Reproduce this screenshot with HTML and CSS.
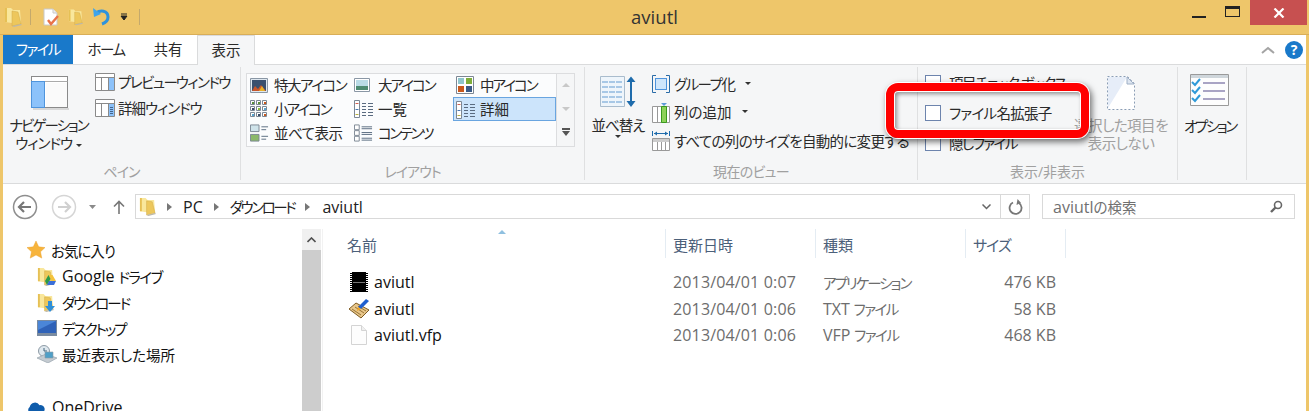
FILE: index.html
```html
<!DOCTYPE html>
<html lang="ja">
<head>
<meta charset="utf-8">
<title>aviutl</title>
<link rel="stylesheet" href="styles.css">
</head>
<body>
<svg class="defs" width="0" height="0">
	<symbol id="folder" viewBox="0 0 18 20">
		<path d="M1 1h6l2 2 7 0 1 13H8l-7-1z" fill="#f9e79c"/>
		<path d="M1 1h2v14H1z" fill="#e6c055"/>
		<path d="M8 4l6 1 3 12-9 2z" fill="#edc75c" stroke="#d0aa48" stroke-width=".5"/>
		<path d="M8 19l9-2 1 1-8 2z" fill="#bdb8a8"/>
	</symbol>
	<symbol id="grid" viewBox="0 0 18 18">
		<g fill="#fff" stroke="#7c8794">
			<path d="M.5.5h4v4h-4zM6.5.5h4v4h-4zM12.5.5h4v4h-4zM.5 6.5h4v4h-4zM6.5 6.5h4v4h-4zM12.5 6.5h4v4h-4zM.5 12.5h4v4h-4zM6.5 12.5h4v4h-4zM12.5 12.5h4v4h-4z"/>
		</g>
		<path fill="#5c8f3c" d="M2 2h2v2H2zM8 2h2v2H8z"/><path fill="#c9581c" d="M14 2h2v2h-2zM14 14h2v2h-2z"/>
		<path fill="#3a4a66" d="M2 8h2v2H2zM8 14h2v2H8z"/><path fill="#8dbb3b" d="M8 8h2v2H8z"/><path fill="#58a4d0" d="M14 8h2v2h-2zM2 14h2v2H2z"/>
	</symbol>
	<symbol id="lines" viewBox="0 0 20 18">
		<path d="M.5.5h5v17h-5z" fill="#fff" stroke="#7c8794"/>
		<path d="M1.5 3.5h3" stroke="#d06050"/><path d="M1.5 9.5h3" stroke="#4a78b0"/><path d="M1.5 14.5h3" stroke="#b8b040"/>
		<path d="M8 3.5h4M14 3.5h5M8 6.5h4M14 6.5h5M8 9.5h4M14 9.5h5M8 12.5h4M14 12.5h5M8 15.5h4M14 15.5h5" stroke="#5a6b80"/>
	</symbol>
	<symbol id="check" viewBox="0 0 16 16">
		<rect x=".5" y=".5" width="15" height="15" fill="#fff" stroke="#6d84ad"/>
	</symbol>
</svg>

<div class="window">
	<header class="titlebar">
		<div class="qat">
			<svg width="18" height="20"><use href="#folder"/></svg>
			<span class="qat-sep sep-a"></span>
			<svg width="20" height="20" viewBox="0 0 20 20"><path d="M2 2h9l4 4v12H2z" fill="#fff" stroke="#c8c8c8"/><path d="M11 2v4h4" fill="#eee" stroke="#c8c8c8"/><path d="M6 13l3 4 7-8" fill="none" stroke="#e8734a" stroke-width="2.4"/></svg>
			<svg class="qat-folder" width="15" height="20"><use href="#folder"/></svg>
			<svg class="qat-undo" width="18" height="20" viewBox="0 0 18 20"><path d="M3 6c4-3 12-3 12 4 0 4-3 6-6 7" fill="none" stroke="#2f93dc" stroke-width="3"/><path d="M0 1l1 9 7-3z" fill="#3fa4ea"/></svg>
			<svg class="qat-more" width="8" height="8" viewBox="0 0 8 8"><path d="M1 1h6M1 3h6L4 7z" stroke="#222" fill="#222"/></svg>
			<span class="qat-sep sep-b"></span>
		</div>
		<div class="title">aviutl</div>
		<div class="caption">
			<span class="cap-min"></span>
			<span class="cap-max"></span>
			<span class="cap-close">
				<svg width="12" height="10" viewBox="0 0 12 10"><path d="M1.5 .5l9 9M10.5 .5l-9 9" stroke="#fff" stroke-width="2.2"/></svg>
			</span>
		</div>
	</header>

	<div class="inner">
		<nav class="tabs">
			<a class="tab tab-file t3">ファイル</a>
			<a class="tab tab-home t3">ホーム</a>
			<a class="tab tab-share">共有</a>
			<a class="tab tab-view">表示</a>
			<div class="tabs-right">
				<svg width="14" height="8" viewBox="0 0 14 8"><path d="M1 7l6-5 6 5" fill="none" stroke="#a4a4a4" stroke-width="2"/></svg>
				<span class="help">?</span>
			</div>
		</nav>

		<section class="ribbon">
			<div class="group g-pane">
				<div class="body pane-body">
					<div class="big-btn nav-btn">
						<svg width="38" height="34" viewBox="0 0 38 34">
							<path d="M2 32h36v2H2z" fill="#d8d8d8"/>
							<rect x=".5" y=".5" width="36" height="31" fill="#fff" stroke="#8a8a8a"/>
							<path d="M.5 5.5h36" stroke="#aaa"/>
							<rect x=".5" y="5.5" width="13" height="26" fill="#8cc2fa" stroke="#4f94dc"/>
							<path d="M15 7h21v24H15z" fill="#fafafa"/>
						</svg>
						<span class="big-label"><span class="t4">ナビゲーション</span><br><span class="t2">ウィンドウ</span> <i class="caret"></i></span>
					</div>
					<div class="pane-list">
						<div class="small-btn t3 word-tight"><svg width="20" height="18" viewBox="0 0 20 18"><path d="M.5.5h19v17H.5z" fill="#fff" stroke="#8a8a8a"/><path d="M.5 4.5h19M6.5 4.5v13M13.5 4.5v13" stroke="#8a8a8a"/><path d="M14 5h5v12h-5z" fill="#8cc2fa"/></svg>プレビュー ウィンドウ</div>
						<div class="small-btn t2"><svg width="20" height="18" viewBox="0 0 20 18"><path d="M.5.5h19v17H.5z" fill="#fff" stroke="#8a8a8a"/><path d="M.5 4.5h19M6.5 4.5v13M13.5 4.5v13" stroke="#8a8a8a"/><path d="M14 5h5v12h-5z" fill="#8cc2fa"/><path d="M15 8.5h3M15 10.5h3M15 12.5h3M15 14.5h3" stroke="#44658c"/></svg>詳細ウィンドウ</div>
					</div>
				</div>
				<div class="group-label t2">ペイン</div>
			</div>

			<div class="group g-layout">
				<div class="body layout-body">
					<div class="gallery">
						<div class="g-item t3"><svg width="18" height="15" viewBox="0 0 18 15"><path d="M.5.5h17v14H.5z" fill="#dfe8f0" stroke="#8a97a5"/><path d="M2 2h14v11H2z" fill="#39506f"/><path d="M2 13l3-5 3 3 3-4 5 6z" fill="#c8562c"/><path d="M9 13l3-5 3 5z" fill="#e8b32a"/></svg>特大アイコン</div>
						<div class="g-item t4"><svg width="16" height="14" viewBox="0 0 16 14"><path d="M.5.5h15v13H.5z" fill="#fff" stroke="#8a97a5"/><path d="M2 2h12v6H2z" fill="#b9dbe6"/><path d="M2 8h12v4H2z" fill="#4d8b72"/></svg>大アイコン</div>
						<div class="g-item t4"><svg width="18" height="18" viewBox="0 0 18 18"><path d="M.5.5h17v17H.5z" fill="#fff" stroke="#7c8794"/><path d="M2 2h6v6H2z" fill="#8fc6cd"/><path d="M10 2h6v6h-6z" fill="#7fae3b"/><path d="M2 10h6v6H2z" fill="#c9581c"/><path d="M10 10h6v6h-6z" fill="#3a5a86"/></svg>中アイコン</div>
						<div class="g-item t4"><svg width="18" height="18"><use href="#grid"/></svg>小アイコン</div>
						<div class="g-item"><svg width="20" height="18"><use href="#lines"/></svg>一覧</div>
						<div class="g-item selected"><svg width="20" height="18"><use href="#lines"/></svg>詳細</div>
						<div class="g-item t1"><svg width="19" height="18" viewBox="0 0 20 18"><path d="M.5.5h9v7h-9z" fill="#cfe3ea" stroke="#7c8794"/><path d="M.5 10.5h9v7h-9z" fill="#8bb86a" stroke="#7c8794"/><path d="M12 2.5h7M12 5.5h5M12 12.5h7M12 15.5h5" stroke="#5a6b80"/></svg>並べて表示</div>
						<div class="g-item t5"><svg width="19" height="18" viewBox="0 0 20 18"><path d="M.5.5h5v5h-5zM.5 6.5h5v5h-5zM.5 12.5h5v5h-5z" fill="#fff" stroke="#7c8794"/><path d="M8 2.5h11M8 4.5h11M8 8.5h11M8 10.5h11M8 14.5h11M8 16.5h11" stroke="#5a6b80"/></svg>コンテンツ</div>
					</div>
					<div class="gallery-scroll">
						<span class="arrow-up"></span>
						<span class="arrow-down"></span>
						<svg width="10" height="8" viewBox="0 0 10 8"><path d="M1 0h8v2H1zM1 3h8L5 8z" fill="#555"/></svg>
					</div>
				</div>
				<div class="group-label t2">レイアウト</div>
			</div>

			<div class="group g-current">
				<div class="body current-body">
					<div class="big-btn sort-btn">
						<svg width="36" height="32" viewBox="0 0 36 32">
							<path d="M.5.5h24v30H.5z" fill="#eef5fb" stroke="#a9bccd"/>
							<path d="M2 6h21M2 11h21M2 16h21M2 21h21M2 26h21" stroke="#a8c8e6" stroke-width="2" stroke-dasharray="6 1"/>
							<path d="M31 3v25" stroke="#1f6cac" stroke-width="2"/>
							<path d="M26.5 6L31 .5 35.5 6zM26.5 25L31 31l4.5-6z" fill="#1f6cac"/>
						</svg>
						<span class="big-label t2">並べ替え</span>
						<i class="caret caret-below"></i>
					</div>
					<div class="current-list">
						<div class="small-btn t3"><svg width="18" height="18" viewBox="0 0 18 18"><path d="M4 .5H.5v17H4M14 .5h3.5v17H14" fill="none" stroke="#2a6ca8"/><rect x="3.5" y="3.5" width="11" height="11" fill="#cfe6fb" stroke="#4f94dc"/></svg>グループ化 <i class="caret c-after"></i></div>
						<div class="small-btn"><svg width="18" height="20" viewBox="0 0 18 20"><path d="M.5 3.5h17v16H.5z" fill="#fff" stroke="#999"/><path d="M5.5 3.5v16" stroke="#999"/><path d="M9.5 3.5h5v16h-5z" fill="#8ed25a" stroke="#3a9a1e"/><path d="M9 0h6l-3 3z" fill="#5f9bd8"/></svg>列の追加 <i class="caret c-after"></i></div>
						<div class="small-btn t07"><svg width="18" height="20" viewBox="0 0 18 20"><path d="M.5 0v5M17.5 0v5" stroke="#1f6cac"/><path d="M2 2.5h14" stroke="#1f6cac"/><path d="M2 2.5L5 .5v4zM16 2.5L13 .5v4z" fill="#1f6cac"/><path d="M.5 7.5h17v12H.5z" fill="#fff" stroke="#999"/><path d="M1 8h16v3H1z" fill="#ccc"/><path d="M5.5 11v8M9.5 11v8M13.5 11v8" stroke="#999"/></svg>すべての列のサイズを自動的に変更する</div>
					</div>
				</div>
				<div class="group-label t07">現在のビュー</div>
			</div>

			<div class="group g-show">
				<div class="body show-body">
					<div class="check-list">
						<div class="check-row t3"><svg width="16" height="16"><use href="#check"/></svg>項目チェック ボックス</div>
						<div class="check-row t07"><svg width="16" height="16"><use href="#check"/></svg>ファイル名拡張子</div>
						<div class="check-row t3"><svg width="16" height="16"><use href="#check"/></svg>隠しファイル</div>
					</div>
					<div class="big-btn hide-btn">
						<svg width="28" height="34" viewBox="0 0 28 34"><path d="M.5.5h20l7 7v26H.5z" fill="#fff" stroke="#8b9db5" stroke-dasharray="2 2"/><path d="M1 1h19L1 32z" fill="#e6edf8"/><path d="M20 1v7h7z" fill="#dde5f0" stroke="#9fb0c6"/></svg>
						<span class="big-label disabled t1">選択した項目を<br>表示しない</span>
					</div>
				</div>
				<div class="group-label">表示/非表示</div>
			</div>

			<div class="group g-option">
				<div class="body option-body">
					<div class="big-btn option-btn">
						<svg width="40" height="33" viewBox="0 0 40 33">
							<path d="M.5.5h38v31H.5z" fill="#fdfdfd" stroke="#9a9a9a"/>
							<path d="M1 1h37v3H1z" fill="#cfd6db"/>
							<path d="M2 8l3 3 5-6M2 16l3 3 5-6M2 24l3 3 5-6" fill="none" stroke="#2f9ad8" stroke-width="2"/>
							<path d="M13 9h22M13 17h22M13 25h22" stroke="#a9a4c4" stroke-width="2"/>
						</svg>
						<span class="big-label t5">オプション</span>
					</div>
				</div>
				<div class="group-label"></div>
			</div>
		</section>

		<div class="addressbar">
			<div class="nav-buttons">
				<svg width="26" height="26" viewBox="0 0 26 26"><circle cx="13" cy="13" r="11.5" fill="#fff" stroke="#8e8e8e" stroke-width="1.5"/><path d="M19 13H8M12 8l-5 5 5 5" fill="none" stroke="#777" stroke-width="2.2"/></svg>
				<svg width="26" height="26" viewBox="0 0 26 26"><circle cx="13" cy="13" r="11.5" fill="#fff" stroke="#d5d5d5" stroke-width="1.5"/><path d="M7 13h11M14 8l5 5-5 5" fill="none" stroke="#d0d0d0" stroke-width="2.2"/></svg>
				<svg class="nav-down" width="8" height="4" viewBox="0 0 8 4"><path d="M0 0h7L3.5 4z" fill="#8a8a8a"/></svg>
				<svg class="nav-up" width="12" height="14" viewBox="0 0 12 14"><path d="M6 14V2M1 6.5l5-5 5 5" fill="none" stroke="#777" stroke-width="1.6"/></svg>
			</div>
			<div class="address">
				<svg width="17" height="19"><use href="#folder"/></svg>
				<i class="crumb-arrow"></i>
				<span class="lat">PC</span>
				<i class="crumb-arrow"></i>
				<span class="t5">ダウンロード</span>
				<i class="crumb-arrow"></i>
				<span class="lat crumb-last">aviutl</span>
				<span class="address-drop"><svg width="9" height="6" viewBox="0 0 9 6"><path d="M.5.5l4 4 4-4" fill="none" stroke="#666" stroke-width="1.5"/></svg></span>
				<span class="address-refresh"><svg width="15" height="16" viewBox="0 0 15 16"><path d="M5 3.5a6 6 0 1 0 6 .5" fill="none" stroke="#777" stroke-width="1.8"/><path d="M9 0v6l4-3z" fill="#777" transform="rotate(10 9 3)"/></svg></span>
			</div>
			<div class="search">
				<span><span class="lat">aviutl</span>の検索</span>
				<svg width="13" height="13" viewBox="0 0 13 13"><circle cx="8" cy="5" r="3.5" fill="none" stroke="#666" stroke-width="1.6"/><path d="M5.5 7.5L1 12" stroke="#666" stroke-width="2.4"/></svg>
			</div>
		</div>

		<div class="main">
			<aside class="tree">
				<div class="tree-list">
					<div class="tree-row top t2"><svg width="18" height="20" viewBox="0 0 20 20"><path d="M10 0l3 6.5 7 .8-5 4.7 1.4 7L10 15.5 3.6 19 5 12 0 7.3l7-.8z" fill="#f7b43c" stroke="#eaa12c" stroke-width=".5"/></svg>お気に入り</div>
					<div class="tree-row child"><span class="icon-wrap"><svg width="17" height="19"><use href="#folder"/></svg><svg class="badge" width="11" height="10" viewBox="0 0 11 10"><path d="M3.5 0h4L11 6H7z" fill="#f5c33b"/><path d="M3.5 0L0 6l2 4 3.5-6z" fill="#2b9a4a"/><path d="M2 10l2-4h7l-2 4z" fill="#3a6fd8"/></svg></span><span class="lat">Google</span>&nbsp;<span class="t3">ドライブ</span></div>
					<div class="tree-row child t4"><span class="icon-wrap"><svg width="17" height="19"><use href="#folder"/></svg><svg class="badge" width="10" height="11" viewBox="0 0 10 11"><path d="M3 0h4v5h3l-5 6-5-6h3z" fill="#2f8fd8"/></svg></span>ダウンロード</div>
					<div class="tree-row child t4"><span class="icon-wrap"><svg width="20" height="16" viewBox="0 0 20 16"><path d="M0 0h20v16H0z" fill="#7a8ba0"/><path d="M1 1h18v12H1z" fill="#2f62b8"/><path d="M1 1h18L1 10z" fill="#4b86d8"/></svg></span>デスクトップ</div>
					<div class="tree-row child"><span class="icon-wrap"><svg width="20" height="18" viewBox="0 0 20 18"><circle cx="7" cy="6" r="5.5" fill="#dfe8ee" stroke="#8d9aa5"/><path d="M7 3v3h3" fill="none" stroke="#44667f"/><path d="M0 13l9-4 11 4-9 5z" fill="#c4cbd1" stroke="#8d9aa5" stroke-width=".6"/><path d="M8 7h8v6H8z" fill="#4f9fc7" stroke="#8d9aa5" stroke-width=".6"/></svg></span>最近表示した場所</div>
					<div class="tree-row top onedrive lat"><svg width="18" height="14" viewBox="0 0 20 14"><path d="M4 14a4 4 0 0 1-1-7 6 6 0 0 1 11-2 4.5 4.5 0 0 1 2 9z" fill="#0f5cab"/></svg>OneDrive</div>
				</div>
				<div class="scrollbar"><span class="scroll-btn"><svg width="9" height="6" viewBox="0 0 9 6"><path d="M.5 5l4-4 4 4" fill="none" stroke="#505050" stroke-width="1.6"/></svg></span></div>
			</aside>

			<section class="files">
				<div class="file-head">
					<span class="sort-mark"></span>
					<div class="col col-name">名前</div>
					<div class="col col-date">更新日時</div>
					<div class="col col-type">種類</div>
					<div class="col col-size t2">サイズ</div>
				</div>
				<div class="file-row">
					<div class="col col-name"><svg width="18" height="20" viewBox="0 0 18 20"><path d="M0 0h18v20H0z" fill="#000"/><path d="M1 0v20M17 0v20" stroke="#fff" stroke-width="2" stroke-dasharray="1 1"/><path d="M3 10.5h12" stroke="#777"/></svg><span>aviutl</span></div>
					<div class="col col-date">2013/04/01 0:07</div>
					<div class="col col-type t4">アプリケーション</div>
					<div class="col col-size">476 KB</div>
				</div>
				<div class="file-row">
					<div class="col col-name"><svg class="txt-icon" width="21" height="21" viewBox="0 0 21 21"><path d="M0 11l7-6 13 7-8 8z" fill="#e8c68a" stroke="#7d5a22"/><path d="M3 11l9 6M6 9l9 6M9 8l8 5" stroke="#8c6a2c" stroke-width=".9"/><path d="M9 9l8-8 3 2-8 8z" fill="#1f5fd0"/><path d="M9 9l3 2-4 2z" fill="#f2a51f"/></svg><span>aviutl</span></div>
					<div class="col col-date">2013/04/01 0:06</div>
					<div class="col col-type"><span class="lat">TXT</span> <span class="t3">ファイル</span></div>
					<div class="col col-size">58 KB</div>
				</div>
				<div class="file-row">
					<div class="col col-name"><svg class="vfp-icon" width="16" height="20" viewBox="0 0 16 20"><path d="M.5.5h10l5 5v14H.5z" fill="#fdfdfd" stroke="#d4d4d4"/><path d="M10.5.5v5h5" fill="#f0f0f0" stroke="#d4d4d4"/></svg><span>aviutl.vfp</span></div>
					<div class="col col-date">2013/04/01 0:06</div>
					<div class="col col-type"><span class="lat">VFP</span> <span class="t3">ファイル</span></div>
					<div class="col col-size">468 KB</div>
				</div>
			</section>
		</div>
	</div>

	<div class="highlight"></div>
</div>
</body>
</html>
```
FILE: styles.css
```css
html, body {
	margin: 0;
	height: 411px;
	overflow: hidden;
}

body {
	font-family: "Open Sans", "Noto Sans CJK JP", sans-serif;
	font-size: 14.5px;
	font-feature-settings: "palt";
	color: #2a2a2a;
}

.defs {
	position: absolute;
}

svg {
	display: block;
	flex: none;
}

/* Meiryo UI kana are much narrower than Noto's, these pull them in */
.t07 { letter-spacing: -0.7px; }
.t1 { letter-spacing: -0.5px; }
.t2 { letter-spacing: -1px; }
.t3 { letter-spacing: -1.5px; }
.t4 { letter-spacing: -2px; }
.t5 { letter-spacing: -2.4px; }

.word-tight {
	word-spacing: -3px;
}

.lat {
	font-size: 16px;
}

.window {
	position: relative;
	width: 1309px;
	height: 411px;
	background: #eec66a;
	overflow: hidden;
}

/* title bar */
.titlebar {
	height: 35px;
	display: grid;
	grid-template-columns: 1fr auto 1fr;
	border-bottom: 1px solid #d9ae58;
	box-sizing: border-box;
}

.qat {
	display: flex;
	align-items: center;
	padding-left: 4px;
	padding-bottom: 1px;
}

.qat-sep {
	width: 1px;
	height: 16px;
	background: #c4a96c;
}

.sep-a {
	margin: 0 11px 0 8px;
}

.sep-b {
	margin-left: 11px;
}

.qat-folder {
	margin-left: 6px;
}

.qat-undo {
	margin-left: 10px;
}

.qat-more {
	margin-left: 9px;
}

.title {
	font-size: 18.5px;
	color: #333;
	line-height: 34px;
}

.caption {
	display: flex;
	justify-content: flex-end;
	align-items: flex-start;
	padding-right: 2px;
}

.cap-min {
	width: 14px;
	height: 2px;
	background: #222;
	margin: 16px 19px 0 0;
}

.cap-max {
	width: 13px;
	height: 7px;
	border: 1px solid #222;
	border-top-width: 3px;
	margin: 6px 10px 0 0;
}

.cap-close {
	width: 57px;
	height: 25px;
	background: #c75050;
	display: flex;
	align-items: center;
	justify-content: center;
}

/* everything inside the gold frame */
.inner {
	margin: 0 3px;
	background: #fff;
	height: 376px;
}

.tabs {
	display: flex;
	height: 29px;
	border-bottom: 1px solid #dadbdc;
}

.tab {
	height: 29px;
	line-height: 29px;
	text-align: center;
	box-sizing: border-box;
}

.tab-file {
	width: 70px;
	background: #1979ca;
	color: #fff;
}

.tab-home {
	width: 66px;
}

.tab-share {
	width: 58px;
}

.tab-view {
	width: 58px;
	height: 30px;
	background: #f5f6f7;
	border: 1px solid #dadbdc;
	border-bottom: 0;
}

.tabs-right {
	margin-left: auto;
	display: flex;
	align-items: center;
	gap: 10px;
	padding-right: 3px;
}

.help {
	width: 18px;
	height: 18px;
	border-radius: 50%;
	background: #1979ca;
	color: #fff;
	font-weight: 700;
	font-size: 14px;
	line-height: 18px;
	text-align: center;
}

/* ribbon */
.ribbon {
	display: flex;
	height: 116px;
	padding-top: 2px;
	background: #f5f6f7;
	border-bottom: 1px solid #dadbdc;
}

.group {
	display: grid;
	grid-template-rows: 95px 19px;
	grid-template-columns: 100%;
	border-right: 1px solid #dfe0e1;
	box-sizing: border-box;
	height: 113px;
}

.group-label {
	text-align: center;
	color: #a0a0a0;
	font-size: 14px;
	line-height: 19px;
}

.g-pane { width: 238px; }
.g-layout { width: 344px; }
.g-current { width: 333px; }
.g-show { width: 260px; }
.g-option { width: 69px; }

.body {
	display: flex;
}

.big-btn {
	display: flex;
	flex-direction: column;
	align-items: center;
}

.big-label {
	display: block;
	text-align: center;
	line-height: 18px;
	margin-top: 9px;
	white-space: nowrap;
}

.big-label.disabled {
	color: #a0a0a0;
}

.caret {
	display: inline-block;
	width: 0;
	height: 0;
	border: 3px solid transparent;
	border-top: 3px solid #333;
	border-bottom: 0;
	vertical-align: middle;
}

.caret-below {
	display: block;
	margin-top: 0;
}

.c-after {
	margin-left: 7px;
}

/* text sits a little above the icon's centre in these rows */
.small-btn, .check-row, .g-item {
	padding-bottom: 2px;
	box-sizing: border-box;
}

.small-btn svg, .check-row svg, .g-item svg {
	margin-bottom: -2px;
}

.small-btn {
	display: flex;
	align-items: center;
	gap: 4px;
	white-space: nowrap;
}

.pane-body {
	padding: 9px 0 0 7px;
}

.nav-btn {
	width: 80px;
}

.nav-btn .big-label {
	margin: 7px 3px 0 0;
}

.pane-list {
	display: grid;
	grid-auto-rows: 18px;
	gap: 8px;
	margin: -3px 0 0 5px;
}

.pane-list .small-btn {
	gap: 3px;
}

.layout-body {
	padding: 6px 0 0 5px;
}

.gallery {
	display: grid;
	grid-template-columns: 104px 102px 103px;
	grid-template-rows: repeat(3, 24px);
	align-content: center;
	width: 311px;
	height: 74px;
	padding-bottom: 2px;
	background: #fbfcfd;
	border: 1px solid #dcdddf;
	box-sizing: border-box;
}

.g-item {
	display: grid;
	grid-template-columns: 24px auto;
	align-items: center;
	padding-left: 3px;
	white-space: nowrap;
}

.g-item.selected {
	background: #cce4fb;
	border: 1px solid #69a5e0;
	padding-left: 2px;
}

.gallery-scroll {
	width: 18px;
	height: 74px;
	border: 1px solid #dcdddf;
	border-left: 0;
	box-sizing: border-box;
	display: flex;
	flex-direction: column;
	align-items: center;
	padding-top: 9px;
	gap: 20px;
}

.gallery-scroll svg {
	margin-top: -3px;
}

.arrow-up, .arrow-down {
	width: 0;
	height: 0;
	border: 4px solid transparent;
}

.arrow-up {
	border-top: 0;
	border-bottom: 4px solid #c8c8c8;
}

.arrow-down {
	border-bottom: 0;
	border-top: 4px solid #c8c8c8;
}

.current-body {
	padding: 9px 0 0 6px;
}

.sort-btn {
	width: 54px;
}

.current-list {
	display: grid;
	grid-auto-rows: 28.5px;
	margin: -6px 0 0 7px;
	white-space: nowrap;
}

.show-body {
	padding: 1px 0 0 7px;
}

.check-list {
	display: grid;
	grid-auto-rows: 30px;
	width: 150px;
}

.check-row {
	display: flex;
	align-items: center;
	gap: 8px;
	white-space: nowrap;
}

.hide-btn {
	margin-top: 8px;
	width: 92px;
}

.hide-btn .big-label {
	margin-top: 7px;
}

.option-body {
	padding: 7px 0 0 6px;
}

.option-btn .big-label {
	margin-top: 11px;
}

/* address row */
.addressbar {
	display: flex;
	align-items: center;
	height: 45px;
}

.nav-buttons {
	display: flex;
	align-items: center;
	gap: 13px;
	padding-left: 9px;
	width: 123px;
	box-sizing: border-box;
}

.nav-down {
	margin-left: -1px;
}

.nav-up {
	margin-left: 3px;
}

.address {
	display: flex;
	align-items: center;
	width: 895px;
	height: 25px;
	margin-left: 9px;
	border: 1px solid #d9d9d9;
	box-sizing: border-box;
	padding-left: 3px;
	color: #222;
}

.crumb-arrow {
	width: 0;
	height: 0;
	border: 4px solid transparent;
	border-left: 5px solid #777;
	border-right: 0;
	margin: 0 11px;
}

.crumb-last {
	margin-left: 1px;
}

.address-drop {
	margin-left: auto;
	width: 28px;
	display: flex;
	justify-content: center;
}

.address-refresh {
	width: 28px;
	height: 23px;
	border-left: 1px solid #d9d9d9;
	display: flex;
	align-items: center;
	justify-content: center;
}

.search {
	display: flex;
	align-items: center;
	justify-content: space-between;
	width: 253px;
	height: 25px;
	margin-left: 12px;
	padding: 0 11px 0 10px;
	border: 1px solid #d9d9d9;
	box-sizing: border-box;
	color: #707070;
}

/* tree + file list */
.main {
	display: flex;
	height: 182px;
}

.tree {
	display: flex;
	width: 318px;
	flex: none;
}

.tree-list {
	width: 299px;
	padding-top: 8px;
	color: #111;
}

.tree-row {
	display: flex;
	align-items: center;
	height: 26px;
	white-space: nowrap;
}

.tree-row.top {
	padding-left: 24px;
	gap: 6px;
}

.tree-row.child {
	padding-left: 34px;
}

.tree-row.onedrive {
	margin-top: 27px;
	gap: 7px;
}

.icon-wrap {
	position: relative;
	width: 25px;
	flex: none;
}

.badge {
	position: absolute;
	left: 8px;
	top: 8px;
}

.scrollbar {
	width: 19px;
	background: #cdcdcd;
}

.scroll-btn {
	display: flex;
	justify-content: center;
	align-items: center;
	height: 21px;
	background: #f0f0f0;
}

.files {
	flex: 1;
	position: relative;
	border-left: 1px solid #f2f2f2;
	margin-left: 1px;
}

.sort-mark {
	position: absolute;
	left: 175px;
	top: 1px;
	width: 0;
	height: 0;
	border: 4px solid transparent;
	border-top: 0;
	border-bottom: 4px solid #8fc0e0;
}

.file-head, .file-row {
	display: flex;
}

.file-head {
	height: 29px;
	margin-bottom: 11px;
	color: #4c607a;
	font-size: 15px;
}

.file-head .col {
	line-height: 33px;
	border-right: 1px solid #e4ecf3;
}

.file-row {
	height: 26.5px;
	align-items: center;
	color: #6d6d6d;
}

.col {
	box-sizing: border-box;
	flex: none;
	padding-left: 7px;
	white-space: nowrap;
}

.col-name {
	width: 343px;
	padding-left: 24px;
}

.file-row .col-name {
	display: grid;
	grid-template-columns: 27px auto;
	align-items: center;
	color: #111;
	font-size: 16px;
}

.file-row .col-name svg {
	margin-left: 3px;
}

.file-row .col-name .txt-icon {
	margin-left: 2px;
}

.file-row .col-name .vfp-icon {
	margin-left: 4px;
}

.col-date {
	width: 150px;
}

.file-row .col-date {
	font-size: 16px;
	letter-spacing: 0.15px;
}

.col-type {
	width: 150px;
}

.col-size {
	width: 100px;
}

.file-row .col-size {
	text-align: right;
	padding-right: 10px;
	font-size: 16px;
}

/* callout over the ribbon */
.highlight {
	position: absolute;
	left: 886px;
	top: 83px;
	width: 203px;
	height: 55px;
	box-sizing: border-box;
	border: 8px solid #f00;
	border-radius: 12px;
	box-shadow: 0 0 0 1px #fff, 2px 3px 6px 1px rgba(0, 0, 0, 0.55), inset 0 0 0 1px #fff, inset 2px 2px 4px 1px rgba(0, 0, 0, 0.4);
}
```
